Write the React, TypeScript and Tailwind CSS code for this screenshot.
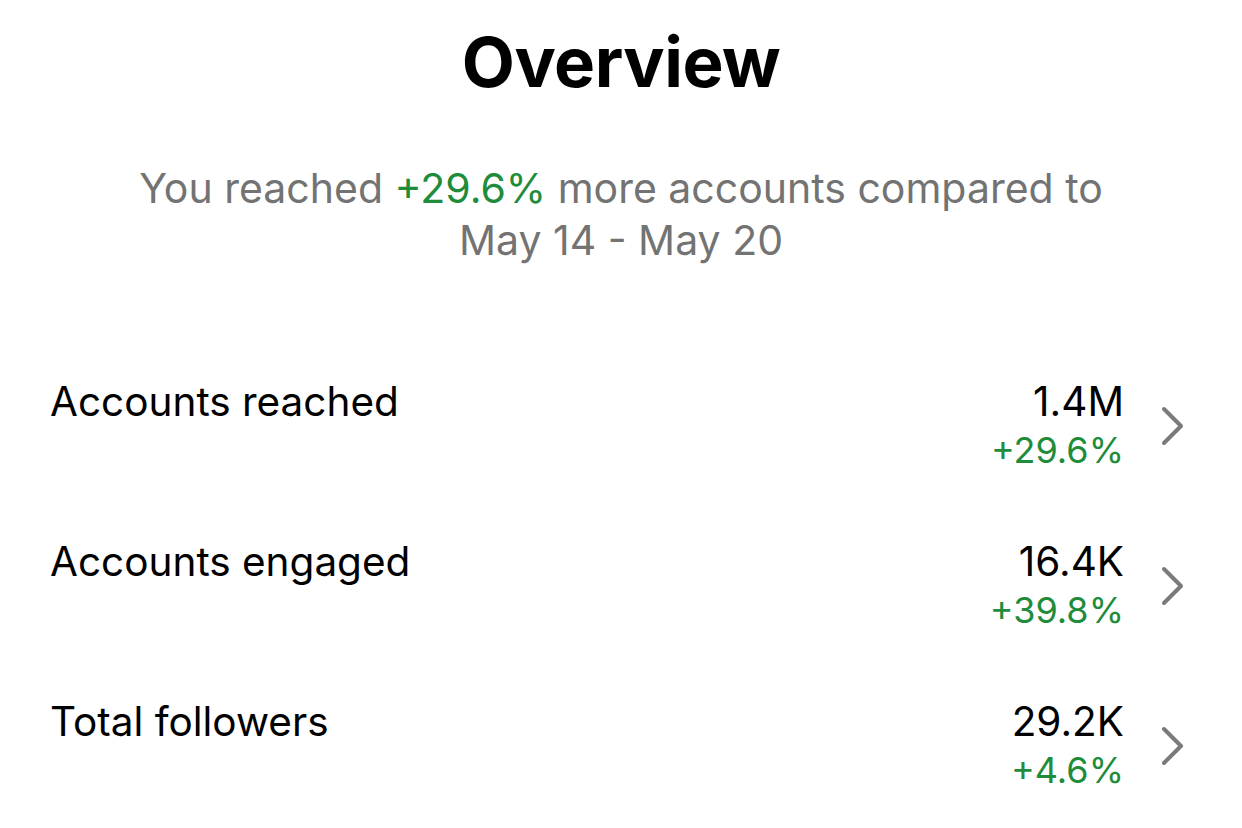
import React from 'react'

const rows = [
  { label: 'Accounts reached', value: '1.4M', change: '+29.6%' },
  { label: 'Accounts engaged', value: '16.4K', change: '+39.8%' },
  { label: 'Total followers', value: '29.2K', change: '+4.6%' },
]

function Chevron() {
  return (
    <svg width="26" height="40" viewBox="0 0 26 40" fill="none" className="shrink-0">
      <path d="M4 3 L21 20 L4 37" stroke="#7a7a7a" strokeWidth="4" strokeLinecap="round" strokeLinejoin="round" />
    </svg>
  )
}

export default function App() {
  return (
    <div
      className="w-[1242px] h-[828px] overflow-hidden bg-white text-black"
      style={{ fontFamily: 'Inter, "Noto Sans", sans-serif' }}
    >
      <h1 className="pt-[22px] text-center text-[69px] font-bold leading-[80px] tracking-[-0.5px]">Overview</h1>
      <p className="mt-[60px] text-center text-[41px] leading-[52px] text-[#737373]">
        You reached <span className="text-[#1e8c3b]">+29.6%</span> more accounts compared to
        <br />
        May 14 - May 20
      </p>
      <div className="mt-[112px] flex flex-col gap-[48px] pl-[50px] pr-[56px]">
        {rows.map((r) => (
          <div key={r.label} className="flex items-start justify-between h-[112px]">
            <div className="text-[40.5px] leading-[48px]">{r.label}</div>
            <div className="flex items-center gap-[36px]">
              <div className="flex flex-col items-end">
                <div className="text-[40.5px] leading-[48px]">{r.value}</div>
                <div className="text-[36px] leading-[48px] text-[#1e8c3b]">{r.change}</div>
              </div>
              <Chevron />
            </div>
          </div>
        ))}
      </div>
    </div>
  )
}
